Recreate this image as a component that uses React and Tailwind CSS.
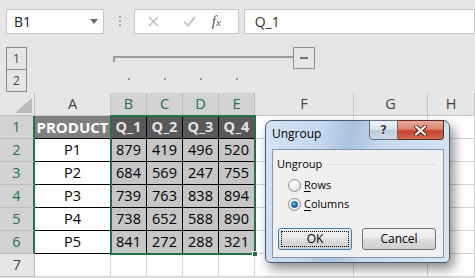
import React from 'react';

const COLS = 'grid grid-cols-[35px_76px_36px_36px_36px_36px_99px_74px_1fr]';

const rows = [
  ['P1', '879', '419', '496', '520'],
  ['P2', '684', '569', '247', '755'],
  ['P3', '739', '763', '838', '894'],
  ['P4', '738', '652', '588', '890'],
  ['P5', '841', '272', '288', '321'],
];

const FormulaBar = () => (
  <div className="h-[41px] flex items-start pt-[9px] font-['Open_Sans',sans-serif]">
    <div className="ml-[6px] w-[101px] h-[25px] bg-white border border-[#c6c6c6] flex items-center justify-between pl-[7px] pr-[5px]">
      <span className="text-[14px] text-[#222] leading-none">B1</span>
      <svg width="8" height="5" viewBox="0 0 8 5">
        <path d="M0 0h8L4 5z" fill="#6a6a6a" />
      </svg>
    </div>
    <div className="ml-[15px] mt-[7px] flex flex-col gap-[2px]">
      <div className="w-[2px] h-[2px] bg-[#a8a8a8]" />
      <div className="w-[2px] h-[2px] bg-[#a8a8a8]" />
      <div className="w-[2px] h-[2px] bg-[#a8a8a8]" />
    </div>
    <div className="ml-[13px] w-[109px] h-[25px] bg-white border border-[#c6c6c6] flex items-center">
      <svg className="ml-[13px]" width="11" height="11" viewBox="0 0 11 11">
        <path d="M1 1l9 9M10 1l-9 9" stroke="#bdbdbd" strokeWidth="1.4" fill="none" />
      </svg>
      <svg className="ml-[24px]" width="13" height="11" viewBox="0 0 13 11">
        <path d="M1 5.5l4 4L12 1" stroke="#c9c9c9" strokeWidth="2" fill="none" />
      </svg>
      <span className="ml-[16px] font-['Liberation_Serif',serif] italic text-[#555] text-[15px] leading-none">
        f<span className="text-[11px]">x</span>
      </span>
    </div>
    <div className="ml-[5px] w-[240px] h-[25px] bg-white border border-[#c6c6c6] flex items-center pl-[10px]">
      <span className="text-[14px] text-[#333] leading-none">Q_1</span>
    </div>
  </div>
);

const OutlineArea = () => (
  <div className={`${COLS} h-[52px] pt-[6px] grid-rows-[23px_22px]`}>
    <div className="pl-[6px]">
      <div className="w-[21px] h-[23px] border border-[#8a8a8a] flex items-center justify-center text-[12px] text-[#444] font-['Open_Sans',sans-serif]">
        1
      </div>
    </div>
    <div />
    <div className="col-span-5 flex items-start">
      <div className="ml-[2px] mt-[9px] w-[180px] h-[6px] border-t-2 border-l-2 border-[#9a9a9a]" />
      <div className="w-[22px] h-[22px] border border-[#8c8c94] flex items-center justify-center">
        <div className="w-[8px] h-[2px] bg-[#6b6b6b]" />
      </div>
    </div>
    <div />
    <div />
    <div className="pl-[6px]">
      <div className="w-[21px] h-[22px] border border-t-0 border-[#8a8a8a] flex items-center justify-center text-[12px] text-[#444] font-['Open_Sans',sans-serif]">
        2
      </div>
    </div>
    <div />
    {[0, 1, 2, 3].map((i) => (
      <div key={i} className="flex justify-center pt-[8px]">
        <div className="w-[2px] h-[2px] bg-[#999]" />
      </div>
    ))}
    <div />
    <div />
    <div />
  </div>
);

const HeaderRow = () => (
  <div className={`${COLS} h-[23px]`}>
    <div className="bg-[#e6e6e6] border-r border-b border-[#bdbdbd] flex items-end justify-end pr-[2px] pb-[2px]">
      <svg width="17" height="15" viewBox="0 0 17 15">
        <path d="M17 0v15H0z" fill="#bcbcbc" />
      </svg>
    </div>
    <div className="bg-[#e6e6e6] border-r border-b border-[#c6c6c6] flex items-center justify-center text-[#444]">A</div>
    {['B', 'C', 'D', 'E'].map((c) => (
      <div key={c} className="bg-[#d2d2d2] border-r border-b border-[#bcbcbc] flex items-center justify-center text-[#217346]">
        {c}
      </div>
    ))}
    {['F', 'G', 'H'].map((c) => (
      <div key={c} className="bg-[#e6e6e6] border-r border-b border-[#c6c6c6] flex items-center justify-center text-[#444]">
        {c}
      </div>
    ))}
  </div>
);

const RowHead = ({ n, selected }) => (
  <div
    className={
      selected
        ? 'bg-[#d2d2d2] border-b border-b-[#bdbdbd] border-r-2 border-r-[#217346] flex items-center justify-center text-[#217346]'
        : 'bg-[#e6e6e6] border-b border-r border-[#bdbdbd] flex items-center justify-center text-[#444]'
    }
  >
    {n}
  </div>
);

const Blank = () => <div className="bg-white border-r border-b border-[#d4d4d4]" />;

const Sheet = () => (
  <div className="relative font-['Open_Sans',sans-serif] text-[14.5px]">
    <HeaderRow />
    <div className={`${COLS} grid-rows-[repeat(7,23px)]`}>
      <RowHead n={1} selected />
      <div className="bg-[#808080] border-r border-b border-black flex items-center justify-center text-white font-bold text-[15px]">
        PRODUCT
      </div>
      {['Q_1', 'Q_2', 'Q_3', 'Q_4'].map((q) => (
        <div key={q} className="bg-[#595959] border-r border-b border-black flex items-center justify-center text-[#e4e4e4] font-bold">
          {q}
        </div>
      ))}
      <Blank />
      <Blank />
      <Blank />

      {rows.map((r, i) => (
        <React.Fragment key={r[0]}>
          <RowHead n={i + 2} selected />
          <div className="bg-white border-r border-b border-black flex items-center justify-center text-black">{r[0]}</div>
          {r.slice(1).map((v, j) => (
            <div key={j} className="bg-[#c6c6c6] border-r border-b border-black flex items-center justify-center text-black">
              {v}
            </div>
          ))}
          <Blank />
          <Blank />
          <Blank />
        </React.Fragment>
      ))}

      <RowHead n={7} />
      {Array.from({ length: 8 }).map((_, i) => (
        <Blank key={i} />
      ))}
    </div>

    {/* selection border */}
    <div className="absolute left-[110px] top-[22px] w-[146px] h-[140px] border-2 border-[#217346] pointer-events-none">
      <div className="absolute -right-[4px] -bottom-[4px] w-[6px] h-[6px] bg-[#217346] border border-white" />
    </div>
  </div>
);

const Radio = ({ checked }) => (
  <div className="w-[13px] h-[13px] rounded-full border border-[#8e8f8f] bg-[radial-gradient(circle_at_40%_35%,#ffffff_0%,#f0f0f0_45%,#d3d3d3_100%)] flex items-center justify-center">
    {checked && (
      <div className="w-[7px] h-[7px] rounded-full bg-[radial-gradient(circle_at_40%_35%,#8fd3f5_0%,#2a7fc0_45%,#0c3e72_100%)] border border-[#1c4f80]" />
    )}
  </div>
);

const Dialog = () => (
  <div className="absolute left-[265px] top-[120px] w-[185px] h-[143px] rounded-t-[7px] rounded-b-[5px] border border-[#4b5a6a] bg-[linear-gradient(100deg,#d4e4f3_0%,#c4d8ee_28%,#a9c2dd_42%,#c6d9ee_58%,#d7e6f4_100%)] shadow-[4px_6px_12px_rgba(0,0,0,0.45)] font-['Open_Sans',sans-serif] text-[11px] text-black">
    <div className="h-[28px] flex items-start">
      <div className="flex-1 pl-[6px] pt-[6px] text-[12px] leading-[14px]">Ungroup</div>
      <div className="-mt-px w-[29px] h-[20px] rounded-bl-[4px] border border-[#5d6c7d] bg-[linear-gradient(180deg,#eef3f8_0%,#d9e3ed_45%,#bccbda_55%,#cfdbe7_100%)] flex items-center justify-center">
        <span className="font-['DejaVu_Sans',sans-serif] font-bold text-[12px] leading-none text-[#3c3c3c] [text-shadow:0_0_1px_#fff,0_0_2px_#fff]">?</span>
      </div>
      <div className="-mt-px mr-[5px] w-[46px] h-[20px] rounded-br-[4px] border border-l-0 border-[#5a2a24] bg-[linear-gradient(180deg,#e9a99a_0%,#dc8570_45%,#c7422b_55%,#d46a52_100%)] flex items-center justify-center">
        <svg width="13" height="11" viewBox="0 0 13 11">
          <path d="M2 1.5l9 8M11 1.5l-9 8" stroke="#5b2219" strokeWidth="4" strokeLinecap="round" fill="none" />
          <path d="M2 1.5l9 8M11 1.5l-9 8" stroke="#ffffff" strokeWidth="2.2" strokeLinecap="round" fill="none" />
        </svg>
      </div>
    </div>
    <div className="ml-[6px] w-[172px] h-[109px] border border-[#8497ae] bg-[#f0f0f0] flex flex-col">
      <div className="flex items-center pl-[4px] pt-[8px] pr-[6px]">
        <span className="leading-[12px]">Ungroup</span>
        <div className="flex-1 ml-[5px] h-px bg-[#d5dfe5]" />
      </div>
      <div className="mt-[7px] h-[16px] flex items-center pl-[15px] gap-[3px]">
        <Radio />
        <span>
          <span className="underline underline-offset-2">R</span>ows
        </span>
      </div>
      <div className="mt-[3px] h-[16px] flex items-center pl-[15px] gap-[3px]">
        <Radio checked />
        <span>
          <span className="underline underline-offset-2">C</span>olumns
        </span>
      </div>
      <div className="mt-[16px] flex pl-[5px] gap-[10px]">
        <div className="w-[74px] h-[22px] rounded-[3px] border border-[#3c7fb1] bg-[linear-gradient(180deg,#f2f2f2_0%,#ebebeb_45%,#dddddd_50%,#cfcfcf_100%)] p-[2px] flex">
          <div className="flex-1 border border-dotted border-black flex items-center justify-center text-[12px]">OK</div>
        </div>
        <div className="w-[74px] h-[22px] rounded-[3px] border border-[#707070] bg-[linear-gradient(180deg,#f2f2f2_0%,#ebebeb_45%,#dddddd_50%,#cfcfcf_100%)] flex items-center justify-center text-[12px]">
          Cancel
        </div>
      </div>
    </div>
  </div>
);

export default function App() {
  return (
    <div className="relative w-[475px] h-[278px] overflow-hidden bg-[#e6e6e6]">
      <FormulaBar />
      <OutlineArea />
      <Sheet />
      <Dialog />
    </div>
  );
}
